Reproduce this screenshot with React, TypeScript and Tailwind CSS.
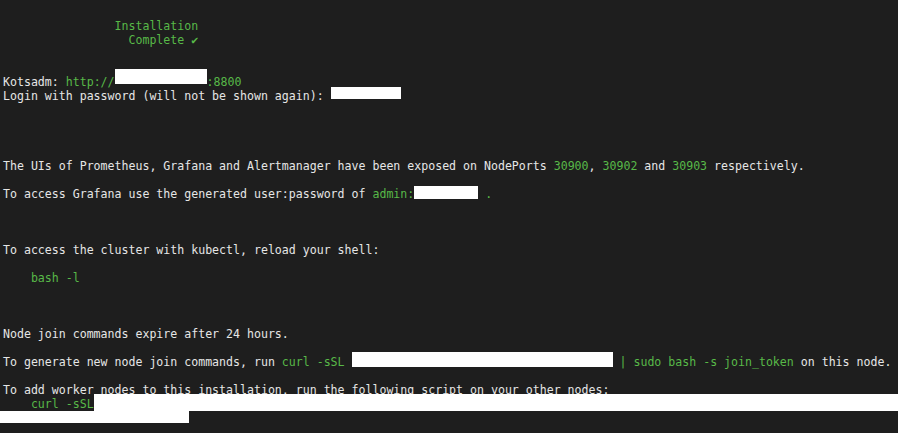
import React from "react";

const G = ({ children }: { children: React.ReactNode }) => (
  <span className="text-[#58b948]">{children}</span>
);

const Row = ({ children }: { children?: React.ReactNode }) => (
  <div className="h-[14px] whitespace-pre pl-[3px]">{children}</div>
);

export default function App() {
  return (
    <div
      className="w-[898px] h-[433px] overflow-hidden bg-[#1e1e1e] text-[#e6e6e6] pt-[4.5px] text-[11.58px] leading-[14px]"
      style={{ fontFamily: '"DejaVu Sans Mono", monospace' }}
    >
      <Row />
      <Row>
        <G>{"                Installation"}</G>
      </Row>
      <Row>
        <G>{"                  Complete ✔"}</G>
      </Row>
      <Row />
      <Row />
      <Row>
        {"Kotsadm: "}
        <G>http://</G>
        <span className="relative -top-[5.5px] inline-block w-[92px] h-[15px] bg-white align-top" />
        <G>:8800</G>
      </Row>
      <Row>
        {"Login with password (will not be shown again): "}
        <span className="relative -top-[1.5px] inline-block w-[70px] h-[12px] bg-white align-top" />
      </Row>
      <Row />
      <Row />
      <Row />
      <Row />
      <Row>
        {"The UIs of Prometheus, Grafana and Alertmanager have been exposed on NodePorts "}
        <G>30900</G>
        {", "}
        <G>30902</G>
        {" and "}
        <G>30903</G>
        {" respectively."}
      </Row>
      <Row />
      <Row>
        {"To access Grafana use the generated user:password of "}
        <G>admin:</G>
        <span className="relative -top-[0.5px] inline-block w-[64px] h-[13px] bg-white align-top" />
        <G>{" ."}</G>
      </Row>
      <Row />
      <Row />
      <Row />
      <Row>{"To access the cluster with kubectl, reload your shell:"}</Row>
      <Row />
      <Row>
        <G>{"    bash -l"}</G>
      </Row>
      <Row />
      <Row />
      <Row />
      <Row>{"Node join commands expire after 24 hours."}</Row>
      <Row />
      <Row>
        {"To generate new node join commands, run "}
        <G>{"curl -sSL "}</G>
        <span className="relative -top-[2.5px] inline-block w-[261px] h-[15px] bg-white align-top" />
        <G>{" | sudo bash -s join_token"}</G>
        {" on this node."}
      </Row>
      <Row />
      <Row>{"To add worker nodes to this installation, run the following script on your other nodes:"}</Row>
      <div className="flex items-start h-[14px] whitespace-pre pl-[3px]">
        <G>{"    curl -sSL"}</G>
        <div className="relative -top-[2.5px] flex-1 h-[17px] bg-white" />
      </div>
      <div className="mt-[0.5px] w-[189px] h-[12px] bg-white" />
    </div>
  );
}
